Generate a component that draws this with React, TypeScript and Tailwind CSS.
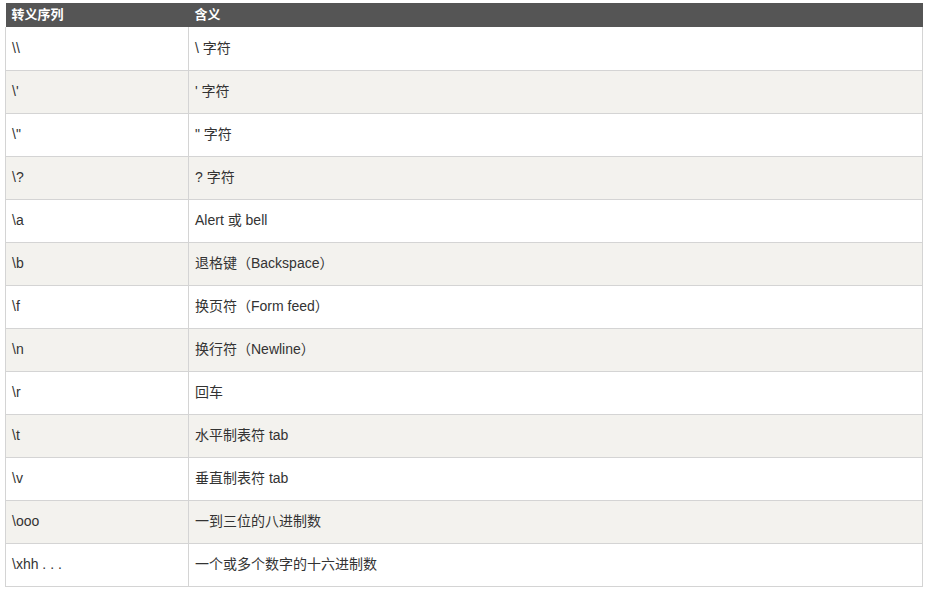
const rows: [string, string][] = [
  ["\\\\", "\\ 字符"],
  ["\\'", "' 字符"],
  ['\\"', '" 字符'],
  ["\\?", "? 字符"],
  ["\\a", "Alert 或 bell"],
  ["\\b", "退格键（Backspace）"],
  ["\\f", "换页符（Form feed）"],
  ["\\n", "换行符（Newline）"],
  ["\\r", "回车"],
  ["\\t", "水平制表符 tab"],
  ["\\v", "垂直制表符 tab"],
  ["\\ooo", "一到三位的八进制数"],
  ["\\xhh . . .", "一个或多个数字的十六进制数"],
];

export default function App() {
  return (
    <div
      className="min-h-[592px] w-[932px] bg-white pl-[5px] pt-[3px] text-[14px] text-[#333]"
      style={{ fontFamily: '"Liberation Sans", Arial, "Noto Sans CJK SC", sans-serif' }}
    >
      <table className="w-[918px] table-fixed border-collapse">
        <thead>
          <tr className="h-[24px] bg-[#555555] text-left text-[13px] text-white">
            <th className="w-[183px] p-0 pl-[6px] font-bold">转义序列</th>
            <th className="p-0 pl-[6px] font-bold">含义</th>
          </tr>
        </thead>
        <tbody>
          {rows.map(([seq, meaning], i) => (
            <tr key={seq} className={i % 2 === 1 ? "h-[43px] bg-[#f3f2ee]" : "h-[43px] bg-white"}>
              <td className="border border-t-0 border-[#d4d4d4] pl-[6px]">{seq}</td>
              <td className="border border-t-0 border-[#d4d4d4] pl-[6px]">{meaning}</td>
            </tr>
          ))}
        </tbody>
      </table>
    </div>
  );
}
